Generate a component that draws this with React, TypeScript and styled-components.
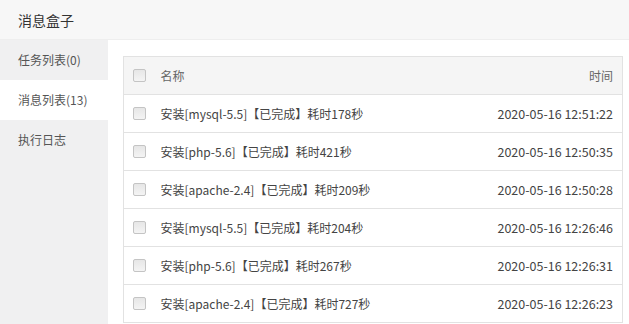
import * as React from "react";
import styled, { createGlobalStyle } from "styled-components";

const GlobalStyle = createGlobalStyle`
  html, body {
    margin: 0;
    padding: 0;
    height: 100%;
    overflow: hidden;
    background: #fff;
    font-family: "Noto Sans CJK SC", "Noto Sans", sans-serif;
  }
  #root {
    height: 100%;
  }
`;

const messages = [
  { name: "安装[mysql-5.5]【已完成】耗时178秒", time: "2020-05-16 12:51:22" },
  { name: "安装[php-5.6]【已完成】耗时421秒", time: "2020-05-16 12:50:35" },
  { name: "安装[apache-2.4]【已完成】耗时209秒", time: "2020-05-16 12:50:28" },
  { name: "安装[mysql-5.5]【已完成】耗时204秒", time: "2020-05-16 12:26:46" },
  { name: "安装[php-5.6]【已完成】耗时267秒", time: "2020-05-16 12:26:31" },
  { name: "安装[apache-2.4]【已完成】耗时727秒", time: "2020-05-16 12:26:23" },
];

const tabs = ["任务列表(0)", "消息列表(13)", "执行日志"];

export default function App() {
  const [active, setActive] = React.useState(1);

  return (
    <>
      <GlobalStyle />
      <StyledBox>
        <Header>消息盒子</Header>
        <Body>
          <Sidebar>
            {tabs.map((tab, i) => (
              <SideItem key={tab} $active={i === active} onClick={() => setActive(i)}>
                {tab}
              </SideItem>
            ))}
          </Sidebar>
          <Content>
            <Table>
              <thead>
                <tr>
                  <CheckCell as="th">
                    <Check />
                  </CheckCell>
                  <HeadCell>名称</HeadCell>
                  <HeadCell $right>时间</HeadCell>
                </tr>
              </thead>
              <tbody>
                {messages.map((m, i) => (
                  <tr key={i}>
                    <CheckCell>
                      <Check />
                    </CheckCell>
                    <Cell>{m.name}</Cell>
                    <Cell $right>{m.time}</Cell>
                  </tr>
                ))}
              </tbody>
            </Table>
          </Content>
        </Body>
      </StyledBox>
    </>
  );
}

const StyledBox = styled.div`
  height: 100%;
  display: flex;
  flex-direction: column;
`;

const Header = styled.div`
  height: 40px;
  box-sizing: border-box;
  padding-left: 18px;
  display: flex;
  align-items: center;
  background: #f7f7f7;
  border-bottom: 1px solid #eee;
  font-size: 14px;
  color: #333;
`;

const Body = styled.div`
  flex: 1;
  display: flex;
  min-height: 0;
`;

const Sidebar = styled.div`
  width: 108px;
  flex-shrink: 0;
  background: #f0f0f1;
`;

const SideItem = styled.div<{ $active?: boolean }>`
  height: 40px;
  line-height: 40px;
  padding-left: 18px;
  font-size: 12px;
  color: #555;
  cursor: pointer;
  background: ${({ $active }) => ($active ? "#fff" : "transparent")};
`;

const Content = styled.div`
  flex: 1;
  padding: 16px 6px 0 15px;
  overflow: hidden;
`;

const Table = styled.table`
  width: 100%;
  border-collapse: collapse;
  border: 1px solid #e2e2e2;
  font-size: 12px;
  color: #444;
  tr {
    height: 38px;
  }
  tbody tr {
    border-top: 1px solid #e2e2e2;
  }
`;

const CheckCell = styled.td`
  width: 37px;
  padding: 0 0 0 9px;
  box-sizing: border-box;
  vertical-align: middle;
  thead & {
    background: #f5f5f5;
  }
`;

const HeadCell = styled.th<{ $right?: boolean }>`
  background: #f5f5f5;
  font-weight: normal;
  color: #666;
  text-align: ${({ $right }) => ($right ? "right" : "left")};
  padding: 0 9px 0 0;
`;

const Cell = styled.td<{ $right?: boolean }>`
  text-align: ${({ $right }) => ($right ? "right" : "left")};
  padding: 0 9px 0 0;
  white-space: nowrap;
  font-size: ${({ $right }) => ($right ? "12.5px" : "12px")};
`;

const Check = styled.span`
  display: block;
  width: 11px;
  height: 11px;
  border: 1px solid #c4c4c4;
  border-radius: 2px;
  background: linear-gradient(#e6e6e6, #f4f4f4);
`;
